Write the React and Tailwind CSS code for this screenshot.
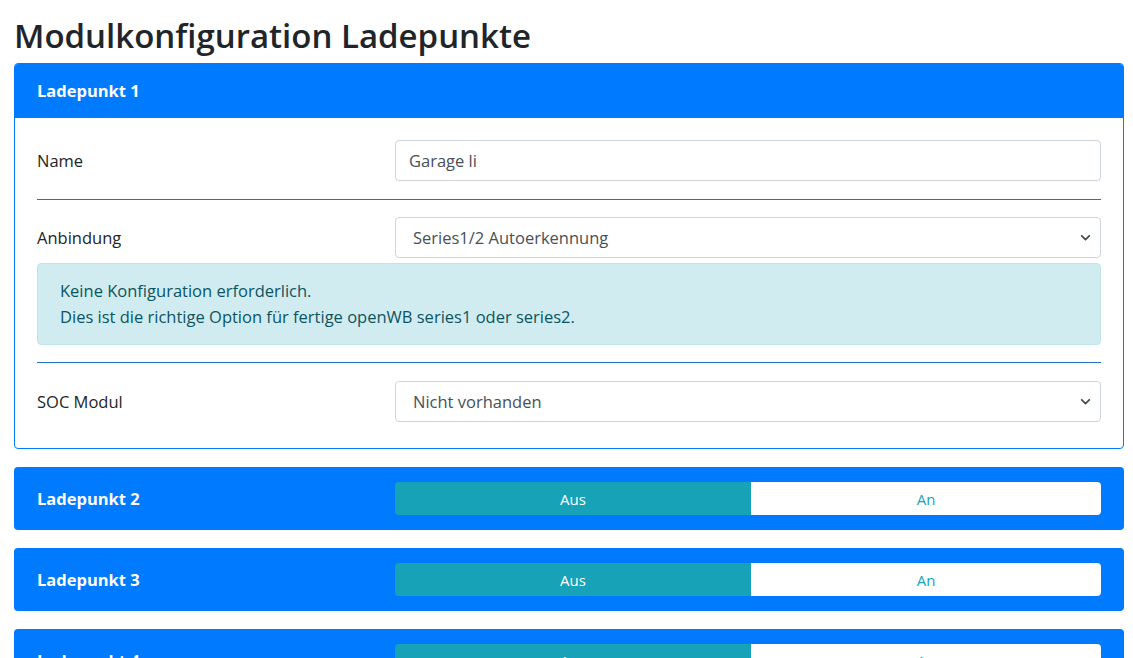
import { useState } from "react";

function Chevron() {
  return (
    <svg width="11" height="11" viewBox="0 0 16 16" className="text-[#4a4f55]">
      <path
        d="M2.5 5.5l5.5 5.5 5.5-5.5"
        fill="none"
        stroke="currentColor"
        strokeWidth="2.6"
        strokeLinecap="round"
        strokeLinejoin="round"
      />
    </svg>
  );
}

function Row({ label, children }) {
  return (
    <div className="flex items-center">
      <div className="w-[358px] shrink-0 text-[#212529]">{label}</div>
      <div className="flex-1">{children}</div>
    </div>
  );
}

function SelectBox({ value }) {
  return (
    <div className="h-[41px] border border-[#ced4da] rounded-[4px] bg-white flex items-center justify-between pl-[17px] pr-[9px] text-[#495057]">
      <span>{value}</span>
      <Chevron />
    </div>
  );
}

function Toggle() {
  const [on, setOn] = useState(false);
  return (
    <div className="flex h-[33px] text-[15px] rounded-[4px] overflow-hidden">
      <button
        onClick={() => setOn(false)}
        className={
          "w-[356px] flex items-center justify-center " +
          (on ? "bg-white text-[#17a2b8]" : "bg-[#17a2b8] text-white")
        }
      >
        Aus
      </button>
      <button
        onClick={() => setOn(true)}
        className={
          "flex-1 flex items-center justify-center " +
          (on ? "bg-[#17a2b8] text-white" : "bg-white text-[#17a2b8]")
        }
      >
        An
      </button>
    </div>
  );
}

function CollapsedCard({ title }) {
  return (
    <div className="bg-[#007bff] rounded-[4px] px-[23px] py-[15px] flex items-center">
      <div className="w-[358px] shrink-0 text-white font-bold">{title}</div>
      <div className="flex-1">
        <Toggle />
      </div>
    </div>
  );
}

export default function App() {
  return (
    <div
      className="pl-[14px] pr-[9px] text-[16.5px] leading-[26px] text-[#212529] bg-white min-h-screen"
      style={{ fontFamily: '"Open Sans", "Noto Sans", sans-serif' }}
    >
      <h1 className="text-[33px] leading-[38px] font-semibold pt-[17px] pb-[8px]">
        Modulkonfiguration Ladepunkte
      </h1>

      <div className="flex flex-col gap-[18px]">
        <div className="border border-[#007bff] rounded-[4px] overflow-hidden">
          <div className="bg-[#007bff] h-[54px] px-[22px] flex items-center text-white font-bold">
            Ladepunkt 1
          </div>
          <div className="px-[22px] pt-[22px] pb-[26px]">
            <Row label="Name">
              <div className="h-[41px] border border-[#ced4da] rounded-[4px] bg-white flex items-center px-[13px] text-[#495057]">
                Garage li
              </div>
            </Row>
            <hr className="border-0 border-t border-[#1f73c7] mt-[18px] mb-[17px]" />
            <Row label="Anbindung">
              <SelectBox value="Series1/2 Autoerkennung" />
            </Row>
            <div className="mt-[5px] bg-[#d1ecf1] border border-[#bee5eb] rounded-[4px] px-[22px] py-[14px] text-[#0c5460]">
              <div>Keine Konfiguration erforderlich.</div>
              <div>Dies ist die richtige Option für fertige openWB series1 oder series2.</div>
            </div>
            <hr className="border-0 border-t border-[#1f73c7] mt-[17px] mb-[18px]" />
            <Row label="SOC Modul">
              <SelectBox value="Nicht vorhanden" />
            </Row>
          </div>
        </div>

        <CollapsedCard title="Ladepunkt 2" />
        <CollapsedCard title="Ladepunkt 3" />
        <CollapsedCard title="Ladepunkt 4" />
        <CollapsedCard title="Ladepunkt 5" />
      </div>
    </div>
  );
}
